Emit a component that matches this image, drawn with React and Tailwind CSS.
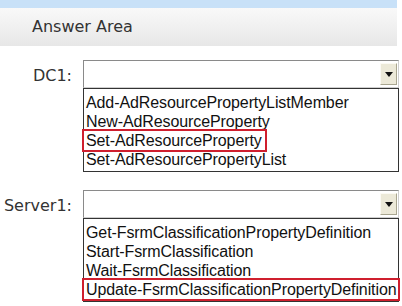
import React from "react";

const lists = [
  {
    label: "DC1:",
    items: [
      "Add-AdResourcePropertyListMember",
      "New-AdResourceProperty",
      "Set-AdResourceProperty",
      "Set-AdResourcePropertyList",
    ],
    picked: 2,
  },
  {
    label: "Server1:",
    items: [
      "Get-FsrmClassificationPropertyDefinition",
      "Start-FsrmClassification",
      "Wait-FsrmClassification",
      "Update-FsrmClassificationPropertyDefinition",
    ],
    picked: 3,
  },
];

function DropBox({ label, items, picked }) {
  return (
    <div className="flex">
      <div className="w-[83px] shrink-0 pr-[11px] pt-[4px] text-right text-[16px] text-[#333] font-['DejaVu_Sans',sans-serif]">
        {label}
      </div>
      <div className="w-[316px]">
        {/* closed select */}
        <div className="h-[28px] flex items-center justify-end border border-[#8a8a8a] border-r-[#cfcfcf] border-b-[#cfcfcf] bg-white pr-[1px]">
          <div className="w-[17px] h-[22px] flex items-center justify-center bg-[#ece9d8] border border-[#fbfaf4] border-r-[#a9a690] border-b-[#a9a690]">
            <svg width="8" height="5" viewBox="0 0 8 5">
              <path d="M0 0h8L4 5z" fill="#111" />
            </svg>
          </div>
        </div>
        {/* open list */}
        <div className="border border-[#333] pt-[4px] pb-[2px] font-['Liberation_Sans',Arial,sans-serif] text-[16px] text-[#111]">
          {items.map((item, i) => (
            <div key={item} className="h-[19px] leading-[19px] whitespace-nowrap">
              <span
                className={
                  "inline-block align-top max-w-full overflow-hidden pl-[2px] pr-[3px] tracking-[-0.1px] " +
                  (i === picked ? "outline-2 outline-[#cf1f2e] relative" : "")
                }
              >
                {item}
              </span>
            </div>
          ))}
        </div>
      </div>
    </div>
  );
}

export default function App() {
  return (
    <div className="w-[402px] h-[306px] bg-white overflow-hidden">
      <div className="h-[8px] w-[397px] bg-[#c8e1f8]" />
      <div className="h-[38px] w-[397px] flex items-center pl-[32px] bg-gradient-to-b from-[#f9f9f9] to-[#e7e7e7] text-[16px] text-[#333] font-['DejaVu_Sans',sans-serif]">
        Answer Area
      </div>
      <div className="mt-[14px] flex flex-col gap-[18px]">
        {lists.map((l) => (
          <DropBox key={l.label} {...l} />
        ))}
      </div>
    </div>
  );
}
